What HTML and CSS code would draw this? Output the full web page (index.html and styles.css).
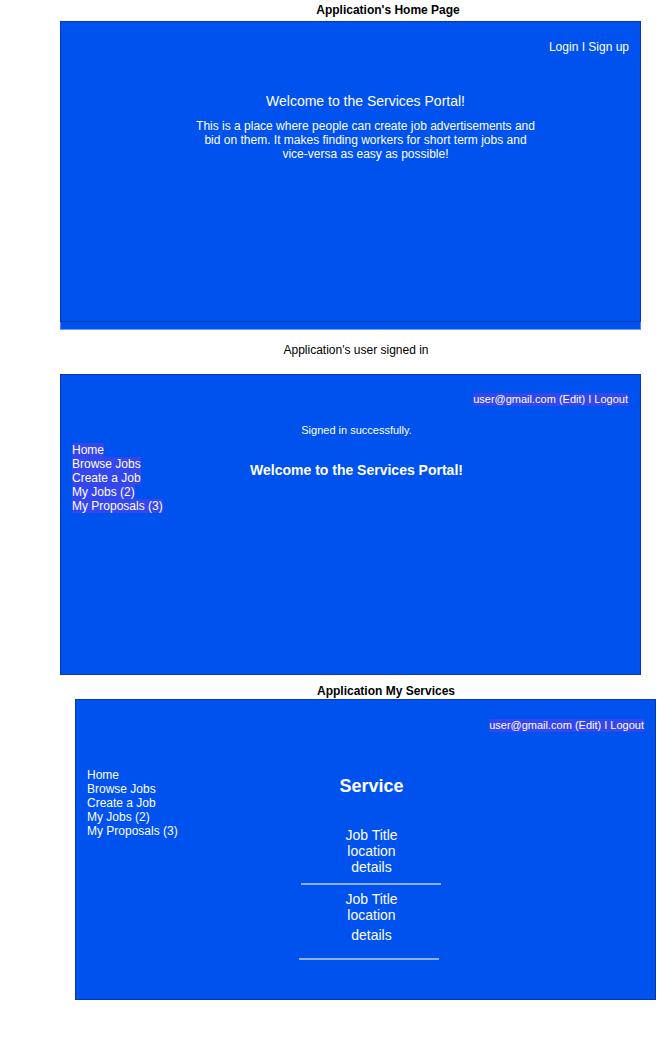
FILE: index.html
```html
<!DOCTYPE html>
<html>
<head>
<meta charset="utf-8">
<link rel="stylesheet" href="styles.css">
</head>
<body>
<div class="caption caption-1">Application's Home Page</div>
<section class="panel panel-1">
  <div class="topbar"><span>Login I Sign up</span></div>
  <div class="hero">
    <h1 class="welcome">Welcome to the Services Portal!</h1>
    <p class="intro">This is a place where people can create job advertisements and bid on them. It makes finding workers for short term jobs and vice-versa as easy as possible!</p>
  </div>
</section>
<div class="strip"></div>

<div class="caption caption-2">Application's user signed in</div>
<section class="panel panel-2">
  <div class="topbar small"><span class="hl">user@gmail.com (Edit) I Logout</span></div>
  <div class="flash">Signed in successfully.</div>
  <div class="layer">
    <nav class="nav">
      <span class="hl">Home</span>
      <span class="hl">Browse Jobs</span>
      <span class="hl">Create a Job</span>
      <span class="hl">My Jobs (2)</span>
      <span class="hl">My Proposals (3)</span>
    </nav>
    <div class="main main-2"><h2 class="welcome-bold">Welcome to the Services Portal!</h2></div>
  </div>
</section>

<div class="caption caption-3">Application My Services</div>
<section class="panel panel-3">
  <div class="topbar small"><span class="hl">user@gmail.com (Edit) I Logout</span></div>
  <div class="layer layer-3">
    <nav class="nav">
      <span>Home</span>
      <span>Browse Jobs</span>
      <span>Create a Job</span>
      <span>My Jobs (2)</span>
      <span>My Proposals (3)</span>
    </nav>
    <div class="main main-3">
      <h2 class="service">Service</h2>
      <div class="job">
        <div>Job Title</div>
        <div>location</div>
        <div>details</div>
      </div>
      <div class="rule"></div>
      <div class="job job-2">
        <div>Job Title</div>
        <div>location</div>
        <div class="details">details</div>
      </div>
      <div class="rule rule-2"></div>
    </div>
  </div>
</section>
</body>
</html>
```

FILE: styles.css
```css
* { box-sizing: border-box; }
html, body { margin: 0; padding: 0; background: #fff; }
body {
  width: 657px;
  font-family: "Liberation Sans", Arial, sans-serif;
  color: #000;
}
.caption {
  font-size: 12px;
  line-height: 15px;
  text-align: center;
}
.caption-1 { font-weight: bold; padding: 3px 0 3px 119px; }
.caption-2 { padding: 13px 0 16px 55px; }
.caption-3 { font-weight: bold; padding: 9px 0 0 115px; }

.panel {
  width: 581px;
  height: 301px;
  background: #0052ef;
  border: 1px solid #0a36b0;
  color: #fff;
  margin-left: 60px;
}
.panel-3 { margin-left: 75px; }

.topbar {
  display: flex;
  justify-content: flex-end;
  font-size: 12px;
  line-height: 14px;
}
.panel-1 .topbar { padding: 18px 11px 0 0; }
.panel-2 .topbar { padding: 18px 12px 0 0; }
.panel-3 .topbar { padding: 19px 11px 0 0; }
.topbar.small { font-size: 11px; line-height: 13px; }

.hl { background: #3446ef; }

.hero { padding-left: 30px; }
.welcome {
  margin: 39px 0 0;
  font-size: 14px;
  line-height: 16px;
  font-weight: normal;
  text-align: center;
}
.intro {
  width: 350px;
  margin: 10px auto 0;
  font-size: 12px;
  line-height: 14px;
  text-align: center;
}
.strip {
  margin-left: 60px;
  width: 581px;
  height: 8px;
  background: #0052ef;
  border-bottom: 1px solid #6f9dff;
  border-left: 1px solid #4b84ff;
  border-right: 1px solid #4b84ff;
}

.flash {
  margin-top: 18px;
  padding-left: 12px;
  font-size: 11px;
  line-height: 13px;
  text-align: center;
}
.layer {
  display: grid;
  margin-top: 6px;
}
.layer > * { grid-area: 1 / 1; }
.layer-3 { margin-top: 36px; }

.nav {
  display: flex;
  flex-direction: column;
  align-items: flex-start;
  padding-left: 11px;
  font-size: 12px;
  line-height: 14px;
}
.main {
  text-align: center;
  padding-left: 12px;
}
.main-2 { padding-top: 19px; }
.welcome-bold {
  margin: 0;
  font-size: 14px;
  line-height: 16px;
  font-weight: bold;
}
.main-3 { padding-top: 8px; }
.service {
  margin: 0;
  font-size: 18px;
  line-height: 21px;
  font-weight: bold;
}
.job {
  margin-top: 30px;
  font-size: 14px;
  line-height: 16px;
}
.job-2 { margin-top: 6px; }
.job .details { margin-top: 4px; }
.rule {
  width: 140px;
  height: 2px;
  background: #8fb0ff;
  margin: 8px auto 0;
  position: relative;
  left: -1px;
}
.rule-2 { margin-top: 15px; left: -3px; }
```
